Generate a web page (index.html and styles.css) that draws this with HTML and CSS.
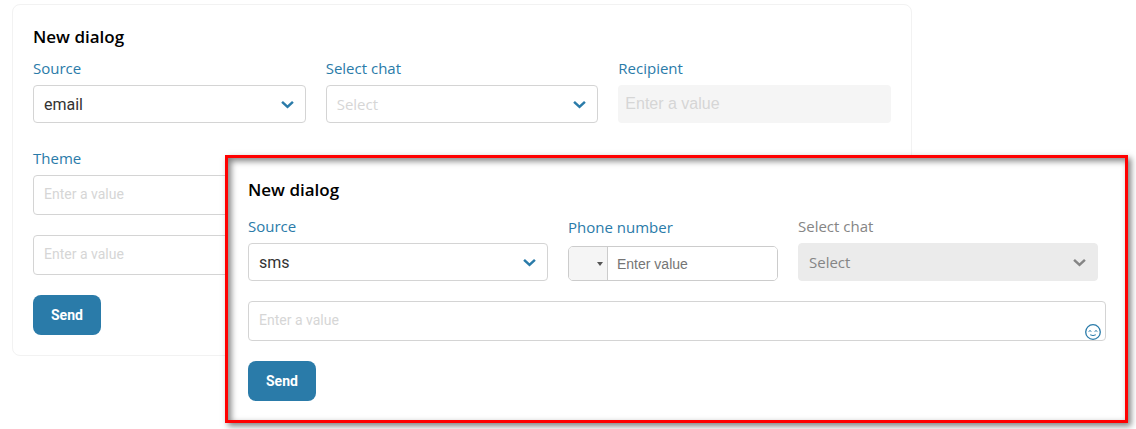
FILE: index.html
```html
<!DOCTYPE html>
<html lang="en">
<head>
<meta charset="utf-8">
<title>New dialog</title>
<link rel="stylesheet" href="styles.css">
</head>
<body>
<main class="page">
  <form class="card">
    <h2 class="title">New dialog</h2>
    <div class="fields">
      <div class="field">
        <label class="label" for="email-source">Source</label>
        <div class="select-wrap">
          <select class="control select" id="email-source"><option>email</option></select>
          <svg class="chevron" viewBox="0 0 12 8" aria-hidden="true"><path d="M1 1.5 6 6.2 11 1.5"/></svg>
        </div>
      </div>
      <div class="field">
        <label class="label" for="email-chat">Select chat</label>
        <div class="select-wrap">
          <select class="control select select-empty" id="email-chat"><option>Select</option></select>
          <svg class="chevron" viewBox="0 0 12 8" aria-hidden="true"><path d="M1 1.5 6 6.2 11 1.5"/></svg>
        </div>
      </div>
      <div class="field">
        <label class="label" for="recipient">Recipient</label>
        <input class="control recipient" id="recipient" type="text" placeholder="Enter a value" disabled>
      </div>
    </div>
    <div class="field theme">
      <label class="label" for="theme">Theme</label>
      <input class="control message" id="theme" type="text" placeholder="Enter a value">
    </div>
    <input class="control message" type="text" placeholder="Enter a value" aria-label="Message">
    <button class="send" type="button">Send</button>
  </form>

  <form class="dialog">
    <h2 class="title">New dialog</h2>
    <div class="fields fields-sms">
      <div class="field">
        <label class="label" for="sms-source">Source</label>
        <div class="select-wrap">
          <select class="control select" id="sms-source"><option>sms</option></select>
          <svg class="chevron" viewBox="0 0 12 8" aria-hidden="true"><path d="M1 1.5 6 6.2 11 1.5"/></svg>
        </div>
      </div>
      <div class="field field-phone">
        <label class="label" for="phone">Phone number</label>
        <div class="phone">
          <button class="country" type="button" aria-label="Country code"><span class="caret"></span></button>
          <input class="phone-input" id="phone" type="tel" placeholder="Enter value">
        </div>
      </div>
      <div class="field field-disabled">
        <label class="label" for="sms-chat">Select chat</label>
        <div class="select-wrap">
          <select class="control select select-empty" id="sms-chat" disabled><option>Select</option></select>
          <svg class="chevron" viewBox="0 0 12 8" aria-hidden="true"><path d="M1 1.5 6 6.2 11 1.5"/></svg>
        </div>
      </div>
    </div>
    <div class="message-wrap">
      <input class="control message" type="text" placeholder="Enter a value" aria-label="Message">
      <button class="emoji" type="button" aria-label="Emoji">
        <svg viewBox="0 0 16 16" aria-hidden="true"><circle cx="8" cy="8" r="7.3"/><path class="face" d="M3.6 7.5Q5 5.7 6.4 7.5M9.6 7.5Q11 5.7 12.4 7.5M5.2 10.8Q8 12.4 10.8 10.8"/></svg>
      </button>
    </div>
    <button class="send" type="button">Send</button>
  </form>
</main>
</body>
</html>
```
FILE: styles.css
```css
* { box-sizing: border-box; }

body {
  margin: 0;
  background: #fff;
  font-family: "Segoe UI", "Open Sans", sans-serif;
}

.page {
  position: relative;
  padding: 4px 224px 73px 12px;
}

.card {
  display: flow-root;
  padding: 20px;
  border: 1px solid #f2f2f2;
  border-radius: 8px;
}

.dialog {
  position: absolute;
  top: 155px;
  left: 225px;
  right: 8px;
  padding: 20px 19px 19px 20px;
  background: #fff;
  border: 3px solid #f00;
  box-shadow: 3px 3px 6px rgba(0, 0, 0, .5), inset 3px 3px 6px rgba(0, 0, 0, .5);
}

.title {
  margin: 0 0 8px;
  font-size: 17px;
  line-height: 24px;
  font-weight: 600;
  color: #000;
}

.dialog .title { margin-bottom: 13px; }

.fields {
  display: grid;
  grid-template-columns: repeat(3, minmax(0, 1fr));
  gap: 20px;
}

.fields-sms {
  grid-template-columns: 10fr 7fr 10fr;
  padding-right: 8px;
}

.field { min-width: 0; }

.label {
  display: block;
  margin-bottom: 6px;
  font-size: 15px;
  line-height: 22px;
  color: #2a7ba9;
}

.theme { margin-top: 24px; }

.control {
  display: block;
  width: 100%;
  height: 38px;
  margin: 0;
  padding: 0 10px;
  border: 1px solid #d4d4d4;
  border-radius: 4px;
  background: #fff;
  color: #333;
  font-family: Roboto, sans-serif;
  font-size: 16px;
  outline: none;
}

.control::placeholder { color: #d6d6d6; opacity: 1; }

.select-wrap, .message-wrap { position: relative; }

.select { appearance: none; opacity: 1; }

.select-empty {
  color: #d6d6d6;
  font-family: "Segoe UI", "Open Sans", sans-serif;
  font-size: 15px;
}

.chevron {
  position: absolute;
  top: 15px;
  right: 12px;
  width: 13px;
  height: 9px;
  fill: none;
  stroke: #2a7ba9;
  stroke-width: 2.3;
  pointer-events: none;
}

.recipient {
  padding: 0 7px;
  border: 0;
  background: #f5f5f5;
  font-family: "Liberation Sans", Arial, sans-serif;
}

.message {
  height: 40px;
  padding-bottom: 2px;
  font-size: 14px;
}

.card > .message { margin-top: 20px; }

.message-wrap { margin-top: 20px; }

.send {
  display: block;
  height: 40px;
  margin-top: 20px;
  padding: 0 18px;
  border: 0;
  border-radius: 8px;
  background: #2a7ba9;
  color: #fff;
  font: bold 14px Roboto, sans-serif;
}

.field-phone {
  display: flex;
  flex-direction: column;
  justify-content: space-between;
}

.field-phone .label {
  margin: 0;
  line-height: 24px;
}

.phone {
  display: flex;
  height: 35px;
  border: 1px solid #ccc;
  border-radius: 5px;
  overflow: hidden;
}

.country {
  display: flex;
  flex: none;
  align-items: center;
  justify-content: flex-end;
  width: 39px;
  padding: 0 4px;
  border: 0;
  border-right: 1px solid #ccc;
  background: #f5f5f5;
}

.caret {
  border: 3px solid transparent;
  border-top: 4px solid #555;
  border-bottom: 0;
}

.phone-input {
  flex: 1;
  min-width: 0;
  padding: 0 9px;
  border: 0;
  font: 14px "Liberation Sans", Arial, sans-serif;
  outline: none;
}

.phone-input::placeholder { color: #757575; opacity: 1; }

.field-disabled .label { color: #858585; }

.field-disabled .select {
  border-color: #ebebeb;
  background: #ebebeb;
  color: #858585;
}

.field-disabled .chevron { stroke: #858585; }

.emoji {
  position: absolute;
  right: 5px;
  bottom: 1px;
  width: 16px;
  height: 16px;
  padding: 0;
  border: 0;
  background: none;
}

.emoji svg {
  display: block;
  fill: none;
  stroke: #2a7ba9;
  stroke-width: 1.3;
}

.emoji .face { stroke-width: 1; }
```
